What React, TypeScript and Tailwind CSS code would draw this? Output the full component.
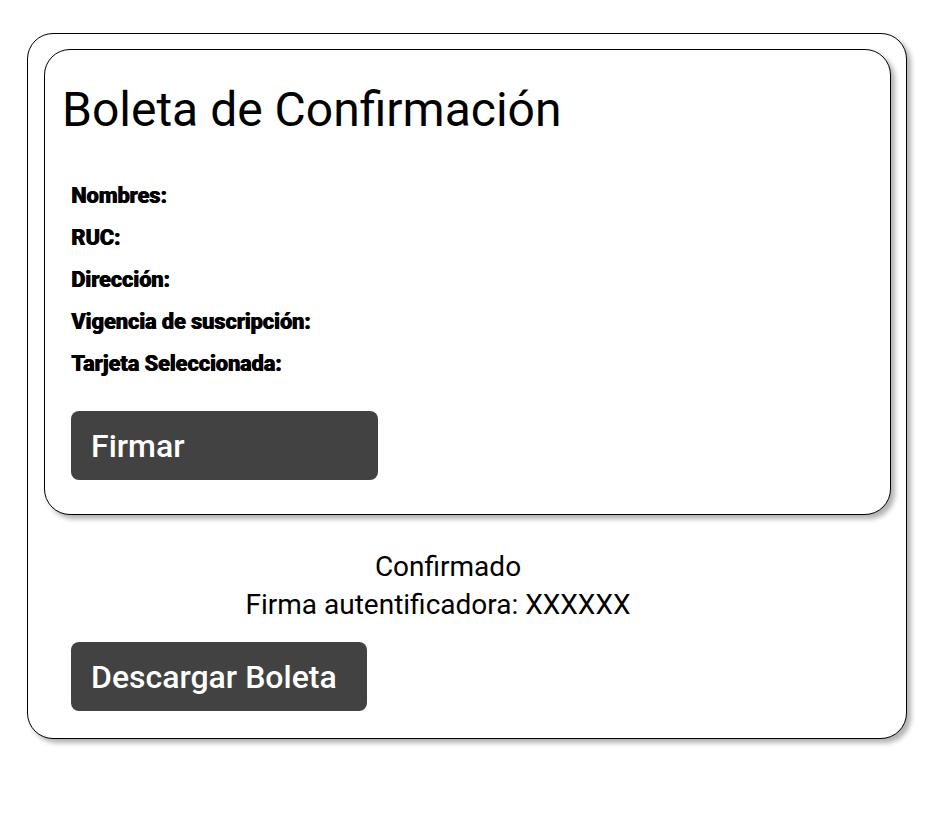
import React from 'react';

const fields = ['Nombres:', 'RUC:', 'Dirección:', 'Vigencia de suscripción:', 'Tarjeta Seleccionada:'];

const DarkButton = ({ label, width }: { label: string; width: string }) => (
  <button
    className={`${width} h-[69px] rounded-lg bg-[#424242] pl-5 text-left text-[32px] font-medium text-white`}
  >
    {label}
  </button>
);

export default function App() {
  return (
    <div className="min-h-screen bg-white pl-[27px] pt-[33px] font-['Roboto',sans-serif] text-black">
      <div className="w-[880px] rounded-[26px] border border-black bg-white pb-[27px] pl-4 pr-4 pt-[15px] shadow-[4px_4px_5px_rgba(0,0,0,0.3)]">
        {/* Boleta card */}
        <div className="h-[466px] w-[847px] rounded-[26px] border border-black bg-white pl-[17px] pt-[32px] shadow-[4px_4px_5px_rgba(0,0,0,0.3)]">
          <h1 className="text-[48px] leading-[56px]">Boleta de Confirmación</h1>
          <div className="mt-[46px] flex flex-col gap-[18px] pl-[9px]">
            {fields.map((f) => (
              <p
                key={f}
                className="text-[22px] font-black leading-[24px] tracking-[-0.2px] [text-shadow:0.5px_0_0_#000]"
              >
                {f}
              </p>
            ))}
          </div>
          <div className="mt-[35px] pl-[9px]">
            <DarkButton label="Firmar" width="w-[307px]" />
          </div>
        </div>

        <div className="mt-[33px] flex w-[762px] flex-col items-center pl-[26px] text-[28px] leading-[38px]">
          <p className="pl-5">Confirmado</p>
          <p>Firma autentificadora: XXXXXX</p>
        </div>

        <div className="mt-[18px] pl-[27px]">
          <DarkButton label="Descargar Boleta" width="w-[296px]" />
        </div>
      </div>
    </div>
  );
}
